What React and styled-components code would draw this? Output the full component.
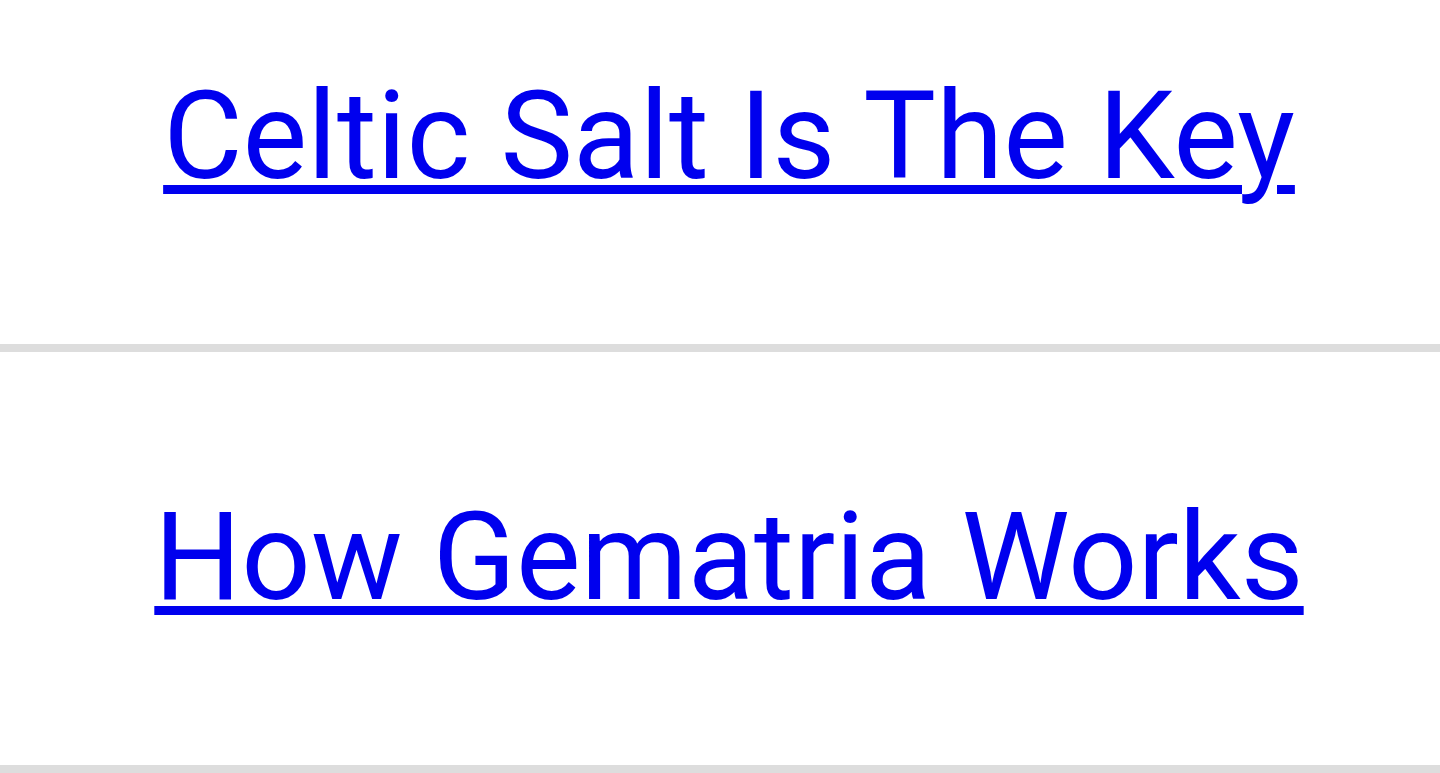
import React from "react";
import styled, { createGlobalStyle } from "styled-components";

const Global = createGlobalStyle`
  html, body { margin: 0; padding: 0; background: #fff; }
  body { font-family: Roboto, "Liberation Sans", sans-serif; overflow: hidden; }
`;

const List = styled.ul`
  list-style: none;
  margin: -69px 0 0;
  padding: 0;
`;

const Item = styled.li`
  padding: 134px 0 136px 18px;
  border-bottom: 8px solid #dddddd;
  text-align: center;
`;

const Link = styled.a`
  font-family: Roboto, "Liberation Sans", sans-serif;
  font-size: 122px;
  line-height: normal;
  color: #0000ee;
  text-decoration: underline;
  text-decoration-thickness: 9px;
  text-underline-offset: 7px;
`;

const links = ["Celtic Salt Is The Key", "How Gematria Works"];

export default function App() {
  return (
    <>
      <Global />
      <List>
        {links.map((t) => (
          <Item key={t}>
            <Link href="#">{t}</Link>
          </Item>
        ))}
      </List>
    </>
  );
}
